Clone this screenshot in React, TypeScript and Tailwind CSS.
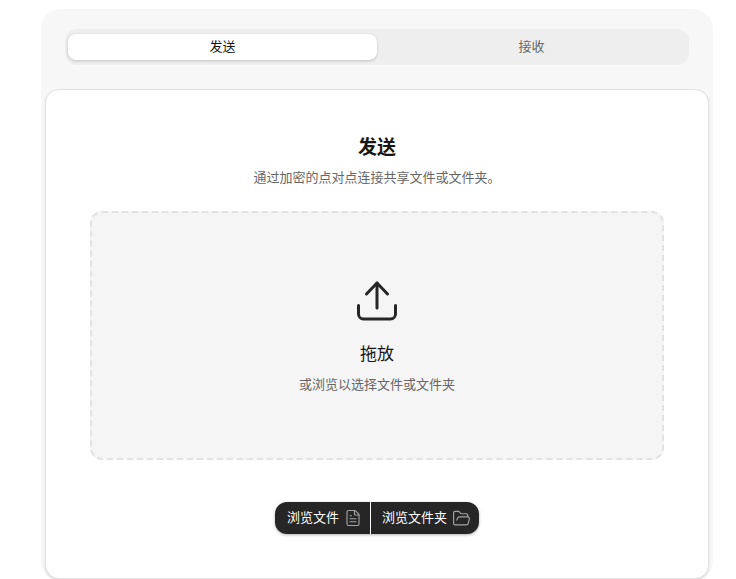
import { FileText, FolderOpen } from "lucide-react";

const fontStack = "font-['Inter','Noto_Sans_CJK_SC',sans-serif]";

function UploadGlyph() {
  return (
    <svg width="40" height="40" viewBox="0 0 40 40" fill="none" stroke="#262626" strokeWidth="3" strokeLinecap="round" strokeLinejoin="round">
      <path d="M20 27V2" />
      <path d="M9.5 13 20 2l10.5 11" />
      <path d="M1.5 24.5v8.5a5 5 0 0 0 5 5h27a5 5 0 0 0 5-5v-8.5" />
    </svg>
  );
}

export default function App() {
  return (
    <div className={`h-[579px] overflow-hidden bg-white pt-[9px] pl-[41px] pr-[23px] ${fontStack}`}>
      <div className="h-[572px] rounded-[20px] bg-[#f7f7f7] px-1">
        <div className="px-5 pt-5">
          <div className="flex h-9 rounded-xl bg-[#eeeeee] px-[3px] py-[5px]">
            <button className="flex w-[309px] items-center justify-center rounded-lg bg-white text-[13px] text-[#171717] shadow-[0_1px_3px_rgba(0,0,0,0.2)]">
              发送
            </button>
            <button className="flex flex-1 items-center justify-center text-[13px] text-[#666666]">
              接收
            </button>
          </div>
        </div>

        <div className="mt-6 flex h-[490px] flex-col items-center rounded-[14px] border border-[#e2e2e2] bg-white px-11 pt-[46px] shadow-[0_1px_2px_rgba(0,0,0,0.12)]">
          <h2 className="text-[19px] leading-6 font-bold text-[#171717]">发送</h2>
          <p className="mt-[8px] text-[13px] leading-[18px] text-[#666666]">通过加密的点对点连接共享文件或文件夹。</p>

          <div className="mt-[25px] flex h-[249px] w-full flex-col items-center rounded-xl border-2 border-dashed border-[#e2e2e2] bg-[#f5f5f5] pt-[68px]">
            <UploadGlyph />
            <p className="mt-[21px] text-[17px] leading-6 text-[#171717]">拖放</p>
            <p className="mt-[9px] text-[13px] leading-[18px] text-[#666666]">或浏览以选择文件或文件夹</p>
          </div>

          <div className="mt-[42px] flex h-8 rounded-xl bg-[#262626] text-[13px] text-white shadow-[0_1px_3px_rgba(0,0,0,0.3)]">
            <button className="flex items-center gap-[5px] border-r border-white pr-2 pl-3">
              浏览文件
              <FileText size={18} strokeWidth={1.5} className="text-[#a3a3a3]" />
            </button>
            <button className="flex items-center gap-[5px] pr-2 pl-[11px]">
              浏览文件夹
              <FolderOpen size={19} strokeWidth={1.5} className="text-[#a3a3a3]" />
            </button>
          </div>
        </div>
      </div>
    </div>
  );
}
